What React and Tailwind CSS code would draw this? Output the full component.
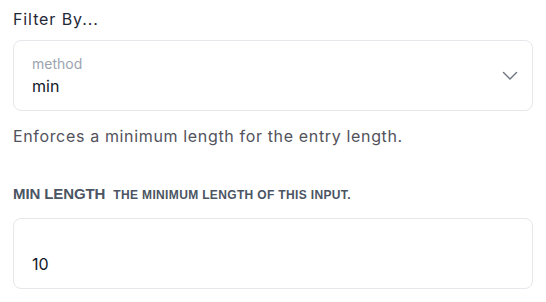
import { useState } from 'react';

// Champ encadré : petit libellé gris au-dessus, valeur en dessous
const Field = ({ label, value, chevron }) => (
  <div className="flex items-center rounded-lg border border-[#e5e7eb] bg-white pl-[18px] pr-[14px] h-[71px]">
    <div className="flex flex-col flex-1 pt-[1px]">
      <span className="text-[14px] leading-5 h-5 text-[#9ca3af]">{label}</span>
      <span className="text-[16px] leading-6 text-[#111827]">{value}</span>
    </div>
    {chevron && (
      <svg width="16" height="10" viewBox="0 0 16 10" fill="none" className="text-[#6b7280]">
        <path d="M1.5 1.5 L8 8 L14.5 1.5" stroke="currentColor" strokeWidth="1.4" strokeLinecap="round" strokeLinejoin="round" />
      </svg>
    )}
  </div>
);

const App = () => {
  const [method] = useState('min');
  const [minLength] = useState('10');

  return (
    <div className="bg-white w-[546px] h-[302px] px-[13px] pt-[7px]" style={{ fontFamily: 'Inter, "Noto Sans", sans-serif' }}>
      <h2 className="text-[16px] leading-6 tracking-[0.9px] text-[#1f2937] mb-[9px]">Filter By...</h2>

      <Field label="method" value={method} chevron />

      <p className="mt-[13px] text-[16px] leading-6 tracking-[0.65px] text-[#52525b]">
        Enforces a minimum length for the entry length.
      </p>

      <div
        className="mt-[35px] flex items-baseline gap-[8px] uppercase text-[#4b5563] font-bold"
        style={{ fontFamily: '"Liberation Sans", Arial, sans-serif' }}
      >
        <span className="text-[15px] leading-[21px] tracking-[-0.1px]">Min Length</span>
        <span className="text-[12px] leading-[21px] tracking-[0.35px]">The minimum length of this input.</span>
      </div>

      <div className="mt-[12px]">
        <Field label="" value={minLength} />
      </div>
    </div>
  );
};

export default App;
